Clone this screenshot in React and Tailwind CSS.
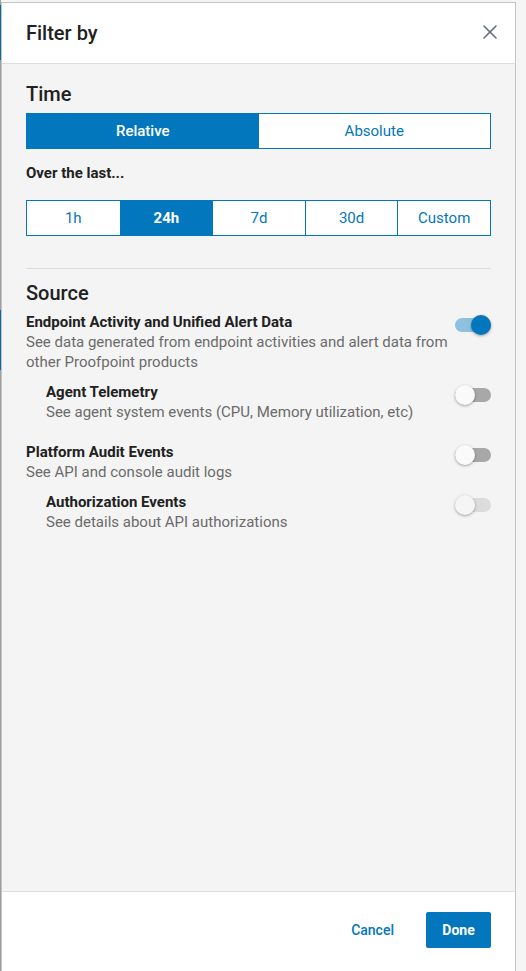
import { X } from "lucide-react";

const blue = "bg-[#0277bd]";

function Toggle({ on, disabled }) {
  return (
    <div className="relative mt-[3px] h-[20px] w-[36px] shrink-0">
      <div
        className={
          "absolute left-0 top-[3px] h-[14px] w-[36px] rounded-full " +
          (on ? "bg-[#8ec1e0]" : disabled ? "bg-[#dcdcdc]" : "bg-[#a8a8a8]")
        }
      />
      <div
        className={
          "absolute top-0 h-[20px] w-[20px] rounded-full shadow-[0_1px_3px_rgba(0,0,0,0.35)] " +
          (on ? "left-[16px] bg-[#0277bd]" : disabled ? "left-0 bg-[#f5f5f5]" : "left-0 bg-[#fafafa]")
        }
      />
    </div>
  );
}

function SourceRow({ title, desc, on, disabled, nested }) {
  return (
    <div className={"flex items-start justify-between " + (nested ? "pl-5" : "")}>
      <div>
        <div className="text-[15px] font-bold leading-[20px] text-[#212121]">{title}</div>
        <div className="text-[15px] leading-[20px] text-[#6b6b6b]">{desc}</div>
      </div>
      <Toggle on={on} disabled={disabled} />
    </div>
  );
}

export default function App() {
  const ranges = ["1h", "24h", "7d", "30d", "Custom"];
  return (
    <div className="flex h-[971px] w-[526px] overflow-hidden bg-[#f5f5f5] font-['Roboto',sans-serif]">
      <div className="flex w-[1px] flex-col bg-[#9e9e9e]">
        <div className="mt-[5px] h-[55px] bg-[#0a6aa8]" />
        <div className="mt-[250px] h-[60px] bg-[#0a6aa8]" />
      </div>
      <div className="mt-[2px] flex w-[515px] flex-col border-l border-r border-t border-[#c4c4c4] bg-[#f4f4f4]">
        <header className="flex h-[61px] shrink-0 items-center justify-between border-b border-[#dedede] bg-white pl-6 pr-[13px]">
          <h1 className="text-[20px] font-medium text-[#212121]">Filter by</h1>
          <X className="-mt-[2px] h-[24px] w-[24px] text-[#5f7080]" strokeWidth={1.6} />
        </header>

        <main className="flex-1 px-6 pt-[17px]">
          <h2 className="text-[20px] font-medium leading-[26px] text-[#212121]">Time</h2>
          <div className="mt-[6px] flex h-[36px] border border-[#0277bd]">
            <div className={"flex flex-1 items-center justify-center text-[15px] font-medium text-white " + blue}>
              Relative
            </div>
            <div className="flex flex-1 items-center justify-center bg-white text-[15px] text-[#0277bd]">
              Absolute
            </div>
          </div>
          <div className="mt-[14px] text-[15px] font-bold leading-[20px] text-[#212121]">Over the last...</div>
          <div className="mt-[17px] grid h-[36px] grid-cols-5 border border-[#0277bd] bg-white">
            {ranges.map((r, i) => (
              <div
                key={r}
                className={
                  "flex items-center justify-center text-[15px] " +
                  (i > 0 ? "border-l border-[#0277bd] " : "") +
                  (r === "24h" ? "bg-[#0277bd] font-bold text-white" : "text-[#0277bd]")
                }
              >
                {r}
              </div>
            ))}
          </div>
          <div className="mt-[32px] h-px bg-[#dcdcdc]" />
          <h2 className="mt-[11px] text-[20px] font-medium leading-[26px] text-[#212121]">Source</h2>
          <div className="mt-[6px] flex flex-col">
            <SourceRow
              title="Endpoint Activity and Unified Alert Data"
              desc={
                <>
                  See data generated from endpoint activities and alert data from
                  <br />
                  other Proofpoint products
                </>
              }
              on
            />
            <div className="mt-[10px]">
              <SourceRow
                nested
                title="Agent Telemetry"
                desc="See agent system events (CPU, Memory utilization, etc)"
              />
            </div>
            <div className="mt-[20px]">
              <SourceRow title="Platform Audit Events" desc="See API and console audit logs" />
            </div>
            <div className="mt-[10px]">
              <SourceRow
                nested
                disabled
                title="Authorization Events"
                desc="See details about API authorizations"
              />
            </div>
          </div>
        </main>

        <footer className="flex h-[80px] shrink-0 items-start justify-end gap-[32px] border-t border-[#dedede] bg-white pr-6 pt-[20px]">
          <button className="mt-[8px] text-[14px] font-medium text-[#0277bd]">Cancel</button>
          <button className="h-[36px] w-[65px] rounded-[2px] bg-[#0277bd] text-[14px] font-bold text-white">
            Done
          </button>
        </footer>
      </div>
    </div>
  );
}
